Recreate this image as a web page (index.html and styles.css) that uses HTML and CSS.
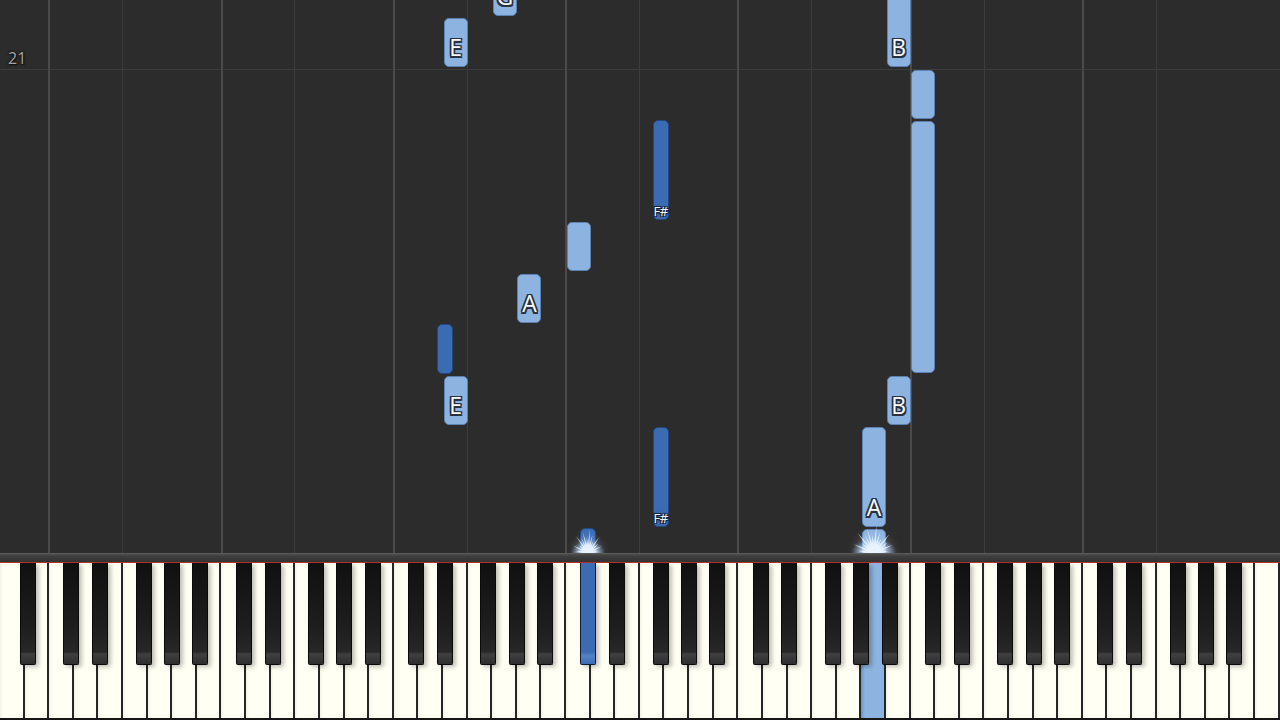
FILE: index.html
```html
<!DOCTYPE html>
<html lang="en">
<head>
  <meta charset="UTF-8" />
  <meta name="viewport" content="width=device-width, initial-scale=1.0"/>
  <title>Piano Roll</title>
  <link rel="stylesheet" href="styles.css">
</head>
<body>

  <div class="stage">
    <div class="roll" id="roll">
      <div class="bar-line"></div>
      <span class="measure">21</span>
    </div>
    <div class="rail"></div>
    <div class="keyboard" id="keyboard">
      <div class="white-keys" id="whiteKeys"></div>
    </div>
  </div>

  <script>
    const KEY_W = 1280 / 52;
    const NAMES = ['C','C#','D','D#','E','F','F#','G','G#','A','A#','B'];
    const BLACK_OFF = { 'C#': -10.5, 'D#': -6.2, 'F#': -12, 'G#': -8.3, 'A#': -4.6 };

    // 88 keys, A0 .. C8
    const keys = {};
    const order = [];
    let whiteCount = 0;
    for (let m = 21; m <= 108; m++) {
      const name = NAMES[m % 12];
      const id = name + (Math.floor(m / 12) - 1);
      let k;
      if (name.length === 1) {
        k = { id, name, white: true, x: whiteCount * KEY_W };
        whiteCount++;
      } else {
        k = { id, name, white: false, x: whiteCount * KEY_W + BLACK_OFF[name] };
      }
      keys[id] = k;
      order.push(k);
    }

    // pressed keys: id -> hand
    const pressed = { 'C#4': 'l', 'A5': 'r' };

    // [key, top, bottom, label]
    const notes = [
      ['G3', -12, 16, 'G'],
      ['E3', 18, 67, 'E'],
      ['B5', -20, 67, 'B'],
      ['C6', 70, 119, ''],
      ['F#4', 120, 220, 'F#'],
      ['C6', 121, 373, ''],
      ['C4', 222, 271, ''],
      ['A3', 274, 323, 'A'],
      ['D#3', 324, 374, ''],
      ['E3', 376, 425, 'E'],
      ['B5', 376, 425, 'B'],
      ['F#4', 427, 527, 'F#'],
      ['A5', 427, 527, 'A'],
      ['C#4', 528, 560, ''],
      ['A5', 529, 560, '']
    ];

    const roll = document.getElementById('roll');

    // grid lines on every C and F (not the last C8)
    order.forEach(k => {
      if ((k.name === 'C' || k.name === 'F') && k.id !== 'C8') {
        const line = document.createElement('div');
        line.className = 'grid-line ' + (k.name === 'C' ? 'c' : 'f');
        line.style.left = Math.round(k.x - 1) + 'px';
        roll.appendChild(line);
      }
    });

    notes.forEach(([id, top, bottom, label]) => {
      const k = keys[id];
      const n = document.createElement('div');
      n.className = 'note ' + (k.white ? 'r' : 'l');
      n.style.left = (k.white ? k.x + 0.5 : k.x) + 'px';
      n.style.top = top + 'px';
      n.style.height = (bottom - top) + 'px';
      if (label) {
        n.innerHTML = '<span class="label">' + label + '</span>';
      }
      roll.appendChild(n);
    });

    // sparkles where notes hit the keys
    const spikeLen = [0.7, 0.95, 0.6, 1, 0.75, 0.9, 0.65, 1, 0.8, 0.6, 0.95, 0.7, 0.85, 0.6];
    function burst(cx, w, h) {
      const pts = [];
      const spikes = spikeLen.length;
      for (let i = 0; i <= spikes * 2; i++) {
        const t = i / (spikes * 2);
        const a = Math.PI * (1 - t);
        const r = i % 2 === 1 ? spikeLen[(i - 1) / 2] : 0.35;
        const x = w / 2 + Math.cos(a) * r * w / 2;
        const y = h - Math.sin(a) * r * h;
        pts.push(x.toFixed(1) + ',' + y.toFixed(1));
      }
      const gid = 'g' + Math.round(cx);
      const el = document.createElement('div');
      el.className = 'spark';
      el.style.left = (cx - w / 2) + 'px';
      el.style.width = w + 'px';
      el.style.height = h + 'px';
      el.innerHTML =
        '<svg width="' + w + '" height="' + h + '" viewBox="0 0 ' + w + ' ' + h + '">' +
        '<defs><radialGradient id="' + gid + '" cx="50%" cy="100%" r="50%">' +
        '<stop offset="0" stop-color="#ffffff"/><stop offset="0.4" stop-color="#d6e7ff" stop-opacity="0.9"/>' +
        '<stop offset="1" stop-color="#9ec2f0" stop-opacity="0"/></radialGradient></defs>' +
        '<rect x="0" y="0" width="' + w + '" height="' + h + '" fill="url(#' + gid + ')"/>' +
        '<polygon points="' + pts.join(' ') + '" fill="#eaf3ff" opacity="0.9"/>' +
        '</svg>';
      roll.appendChild(el);
    }
    burst(keys['C#4'].x + 8, 34, 24);
    burst(keys['A5'].x + 12.5, 46, 28);

    // keyboard
    const whiteKeys = document.getElementById('whiteKeys');
    const keyboard = document.getElementById('keyboard');
    order.forEach(k => {
      const el = document.createElement('div');
      if (k.white) {
        el.className = 'white-key' + (pressed[k.id] ? ' on-' + pressed[k.id] : '');
        whiteKeys.appendChild(el);
      } else {
        el.className = 'black-key' + (pressed[k.id] ? ' on-' + pressed[k.id] : '');
        el.style.left = k.x + 'px';
        keyboard.appendChild(el);
      }
    });
  </script>

</body>
</html>
```

FILE: styles.css
```css
body {
  margin: 0;
  background: #1b1b1b;
  font-family: 'Open Sans', 'DejaVu Sans', sans-serif;
  overflow: hidden;
}
.stage {
  width: 1280px;
  height: 720px;
  display: flex;
  flex-direction: column;
}

/* falling notes area */
.roll {
  position: relative;
  height: 553px;
  background: #2c2c2c;
  overflow: hidden;
}
.bar-line {
  position: absolute;
  left: 0; right: 0;
  top: 69px;
  height: 1px;
  background: #3c3c3c;
}
.measure {
  position: absolute;
  left: 8px;
  top: 47px;
  font-size: 16px;
  color: #a4a4a4;
  text-shadow: 0 0 3px #111, 0 0 2px #111, 1px 1px 1px #111;
}
.grid-line {
  position: absolute;
  top: 0; bottom: 0;
  width: 1px;
}
.grid-line.c { background: #4a4a4a; width: 2px; }
.grid-line.f { background: #3c3c3c; }

.note {
  position: absolute;
  box-sizing: border-box;
  border-radius: 5px;
}
.note.r {
  width: 24px;
  background: #8db4e0;
  border: 1px solid #5c82b2;
}
.note.l {
  width: 16px;
  background: #3b6cb3;
  border: 1px solid #22477e;
}
.note .label {
  position: absolute;
  left: 0; right: 0;
  bottom: 7px;
  text-align: center;
  line-height: 1;
  font-size: 23px;
  color: #fafcff;
  text-shadow:
    1.5px 1.5px 0 #283140, -1.5px -1.5px 0 #283140,
    1.5px -1.5px 0 #283140, -1.5px 1.5px 0 #283140,
    0 1.5px 0 #283140, 0 -1.5px 0 #283140,
    1.5px 0 0 #283140, -1.5px 0 0 #283140;
}
.note.l .label {
  bottom: 1px;
  font-size: 13px;
  letter-spacing: -0.5px;
  text-shadow:
    1px 1px 0 #18202f, -1px -1px 0 #18202f,
    1px -1px 0 #18202f, -1px 1px 0 #18202f,
    0 0 3px #18202f;
}
.spark {
  position: absolute;
  bottom: 0;
  filter: blur(0.6px) drop-shadow(0 0 4px rgba(190, 220, 255, 0.7));
}
.spark svg { display: block; }

/* rail over the keys */
.rail {
  height: 9px;
  background: linear-gradient(#6a6a6a 0, #4c4c4c 1px, #3c3c3c 4px, #333 100%);
  border-bottom: 1px solid #b8322a;
}

/* keyboard */
.keyboard {
  position: relative;
  flex: 1;
  background: #151515;
}
.white-keys {
  display: flex;
  height: 155px;
}
.white-key {
  flex: 1;
  box-sizing: border-box;
  background: linear-gradient(to right, #f2f2e4 0, #fffff4 3px, #fffff4 100%);
  border-right: 2px solid #262626;
}
.white-key.on-r {
  background: linear-gradient(to right, #6f92c0 0, #8db4e0 4px, #8db4e0 100%);
}
.black-key {
  position: absolute;
  top: 0;
  width: 16px;
  height: 102px;
  box-sizing: border-box;
  border: 1px solid #0a0a0a;
  border-top: none;
  border-radius: 0 0 2px 2px;
  background: linear-gradient(#101010 0, #1d1d1d 60%, #272727 88%, #404040 90%, #2e2e2e 100%);
  box-shadow: 3px 2px 4px rgba(0, 0, 0, 0.25);
}
.black-key.on-l {
  background: linear-gradient(#3b6cb3 0, #3b6cb3 88%, #5583c6 92%, #3b6cb3 100%);
  border-color: #0d1c33;
}
```
